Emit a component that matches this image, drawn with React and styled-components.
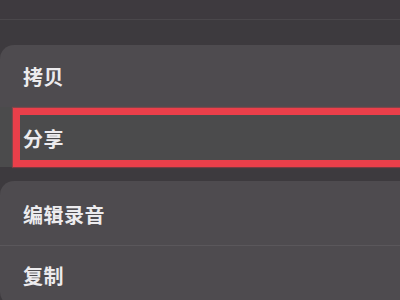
import React from 'react';
import styled, { createGlobalStyle } from 'styled-components';

const Global = createGlobalStyle`
  html, body {
    margin: 0;
    padding: 0;
    background: #3d3a3e;
  }
  body {
    width: 400px;
    height: 300px;
    overflow: hidden;
    font-family: "Noto Sans CJK SC", "Noto Sans", sans-serif;
  }
`;

const Screen = styled.div`
  width: 400px;
  height: 300px;
  overflow: hidden;
  display: flex;
  flex-direction: column;
  background: #3d3a3e;
`;

const TopBar = styled.div`
  height: 19px;
  flex-shrink: 0;
  background: #3e3a3f;
  border-bottom: 1px solid #4a474b;
`;

const Group = styled.div`
  margin-top: ${(p) => p.$gap}px;
  flex-shrink: 0;
  background: #4e4b4f;
  border-radius: 14px 0 0 14px;
  display: flex;
  flex-direction: column;
`;

const Row = styled.div`
  position: relative;
  height: ${(p) => p.$h}px;
  display: flex;
  align-items: center;
  padding-left: 23px;
  font-size: 20px;
  font-weight: 700;
  color: #ecebee;
  letter-spacing: 0.5px;
  background: ${(p) => (p.$marked ? '#4b4b4c' : 'transparent')};
  border-top: ${(p) => (p.$line ? '1px solid #5a575b' : 'none')};

  &::after {
    content: '';
    display: ${(p) => (p.$marked ? 'block' : 'none')};
    position: absolute;
    left: 13px;
    right: -20px;
    top: 1px;
    bottom: 0;
    border: 7px solid #ea3f4a;
    box-shadow: 0 0 1px 1px rgba(232, 64, 75, 0.35);
    pointer-events: none;
  }
`;

const Label = styled.span`
  position: relative;
  top: ${(p) => p.$dy || 0}px;
`;

export default function App() {
  return (
    <>
      <Global />
      <Screen>
        <TopBar />
        <Group $gap={25}>
          <Row $h={62}>
            <Label $dy={0}>拷贝</Label>
          </Row>
          <Row $h={60} $marked>
            <Label $dy={1}>分享</Label>
          </Row>
        </Group>
        <Group $gap={14}>
          <Row $h={64}>
            <Label $dy={1}>编辑录音</Label>
          </Row>
          <Row $h={60} $line>
            <Label $dy={-1}>复制</Label>
          </Row>
        </Group>
      </Screen>
    </>
  );
}
